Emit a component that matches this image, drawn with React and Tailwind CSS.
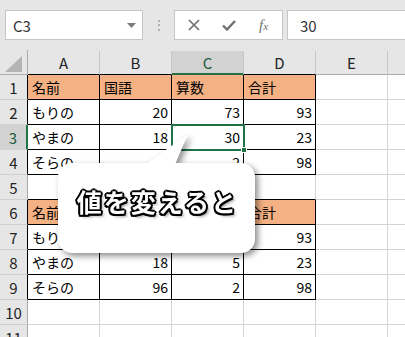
import React from "react";

const FONT = "font-['Noto_Sans_CJK_JP','Noto_Sans',sans-serif]";

const rows = {
  1: ["名前", "国語", "算数", "合計"],
  2: ["もりの", 20, 73, 93],
  3: ["やまの", 18, 30, 23],
  4: ["そらの", 96, 2, 98],
  6: ["名前", "国語", "算数", "合計"],
  7: ["もりの", 20, 73, 93],
  8: ["やまの", 18, 5, 23],
  9: ["そらの", 96, 2, 98],
};
const tableRows = [1, 2, 3, 4, 6, 7, 8, 9];
const headRows = [1, 6];
const cols = ["A", "B", "C", "D", "E", ""];

function Cell({ r, c }) {
  const inTable = tableRows.includes(r) && c <= 4;
  const isHead = headRows.includes(r) && c <= 4;
  const val = rows[r] && c <= 4 ? rows[r][c - 1] : "";
  const bottomBlack = inTable || (r === 5 && c <= 4);
  const br = inTable ? "border-r-black" : "border-r-[#d4d4d4]";
  const bb = bottomBlack ? "border-b-black" : "border-b-[#d4d4d4]";
  const bg = isHead ? "bg-[#f4b183]" : "bg-white";
  const isNum = typeof val === "number";
  return (
    <div
      className={`h-[25px] box-border border-r border-b ${br} ${bb} ${bg} flex items-center ${
        isNum ? "justify-end pr-[3px]" : "justify-start pl-[4px]"
      } text-[14px] text-black leading-none overflow-hidden whitespace-nowrap`}
    >
      {val}
    </div>
  );
}

function RowHeader({ r }) {
  const sel = r === 3;
  const inTable = tableRows.includes(r);
  const rc = sel
    ? "border-r-2 border-r-[#217346] bg-[#d2d2d2] text-[#215a3a]"
    : inTable
    ? "border-r border-r-black bg-[#e6e6e6] text-[#222]"
    : "border-r border-r-[#ababab] bg-[#e6e6e6] text-[#222]";
  return (
    <div
      className={`h-[25px] box-border border-b border-b-[#d0d0d0] ${rc} flex items-center justify-center text-[15px] leading-none`}
    >
      {r}
    </div>
  );
}

export default function App() {
  const gridRows = [1, 2, 3, 4, 5, 6, 7, 8, 9, 10, 11];
  return (
    <div className={`relative w-[405px] h-[337px] overflow-hidden bg-white ${FONT}`}>
      {/* Formula bar */}
      <div className="h-[50px] bg-[#e6e6e6] flex items-start pt-[10px] pl-[5px]">
        <div className="w-[138px] h-[30px] box-border bg-white border border-[#c6c6c6] flex items-center justify-between pl-[7px] pr-[6px]">
          <span className="text-[15px] text-[#333] leading-none">C3</span>
          <svg width="9" height="5" viewBox="0 0 9 5">
            <polygon points="0,0 9,0 4.5,5" fill="#7a7a7a" />
          </svg>
        </div>
        <div className="w-[31px] h-[30px] flex flex-col items-center justify-center gap-[2.5px]">
          <div className="w-[2px] h-[2px] bg-[#b0b0b0]" />
          <div className="w-[2px] h-[2px] bg-[#b0b0b0]" />
          <div className="w-[2px] h-[2px] bg-[#b0b0b0]" />
        </div>
        <div className="w-[109px] h-[30px] box-border bg-white border border-[#c6c6c6] flex items-center pl-[13px]">
          <svg width="12" height="12" viewBox="0 0 12 12">
            <path d="M1 1 L11 11 M11 1 L1 11" stroke="#707070" strokeWidth="1.7" />
          </svg>
          <svg className="ml-[22px]" width="14" height="11" viewBox="0 0 14 11">
            <path d="M1 5.5 L5 9.5 L13 1" stroke="#707070" strokeWidth="2.4" fill="none" />
          </svg>
          <span className="ml-[23px] italic font-['Liberation_Serif',serif] text-[15px] text-[#707070] leading-none">
            f<span className="text-[11px]">x</span>
          </span>
        </div>
        <div className="ml-[4px] flex-1 h-[30px] box-border bg-white border border-r-0 border-[#c6c6c6] flex items-center pl-[12px]">
          <span className="text-[15px] text-[#333] leading-none">30</span>
        </div>
      </div>

      {/* Sheet grid */}
      <div className="grid grid-cols-[28px_72px_72px_72px_72px_72px_72px]">
        <div className="h-[25px] box-border border-r border-b border-r-[#ababab] border-b-[#ababab] bg-[#e6e6e6] flex items-end justify-center pb-[2px]">
          <svg width="18" height="16" viewBox="0 0 18 16">
            <polygon points="17,0 17,16 0,16" fill="#b4b4b4" />
          </svg>
        </div>
        {cols.map((l, i) => {
          const c = i + 1;
          const sel = c === 3;
          const cls = sel
            ? "bg-[#d2d2d2] border-b-2 border-b-[#217346] text-[#215a3a]"
            : c <= 4
            ? "bg-[#e6e6e6] border-b border-b-black text-[#222]"
            : "bg-[#e6e6e6] border-b border-b-[#ababab] text-[#222]";
          return (
            <div key={l + i} className="h-[25px] bg-[#e6e6e6] pt-[1px]">
              <div
                className={`h-[24px] box-border border-r border-r-[#c6c6c6] ${cls} flex items-center justify-center text-[15px] leading-none`}
              >
                {l}
              </div>
            </div>
          );
        })}
        {gridRows.map((r) => (
          <React.Fragment key={r}>
            <RowHeader r={r} />
            {[1, 2, 3, 4, 5, 6].map((c) => (
              <Cell key={c} r={r} c={c} />
            ))}
          </React.Fragment>
        ))}
      </div>

      {/* selection */}
      <div className="absolute left-[171px] top-[124px] w-[74px] h-[27px] box-border border-2 border-[#217346]" />
      <div className="absolute left-[241px] top-[147px] w-[6px] h-[6px] bg-[#217346] border border-white" />

      {/* speech bubble */}
      <div className="absolute left-[58px] top-[133px] w-[200px] h-[122px] drop-shadow-[3px_3px_3px_rgba(0,0,0,0.45)]">
        <svg className="absolute left-0 top-0" width="200" height="40" viewBox="0 0 200 40">
          <polygon points="84,34 130,1 116,34" fill="white" />
        </svg>
        <div className="absolute left-0 top-[30px] w-[197px] h-[90px] rounded-[14px] bg-white flex items-center justify-center pb-[14px] pl-[2px]">
          <span className="font-bold text-[25px] leading-none text-white tracking-[2px] [text-shadow:2px_0_0_#000,-2px_0_0_#000,0_2px_0_#000,0_-2px_0_#000,1.5px_1.5px_0_#000,-1.5px_1.5px_0_#000,1.5px_-1.5px_0_#000,-1.5px_-1.5px_0_#000,3px_3px_3px_rgba(0,0,0,0.35)]">
            値を変えると
          </span>
        </div>
      </div>
    </div>
  );
}
